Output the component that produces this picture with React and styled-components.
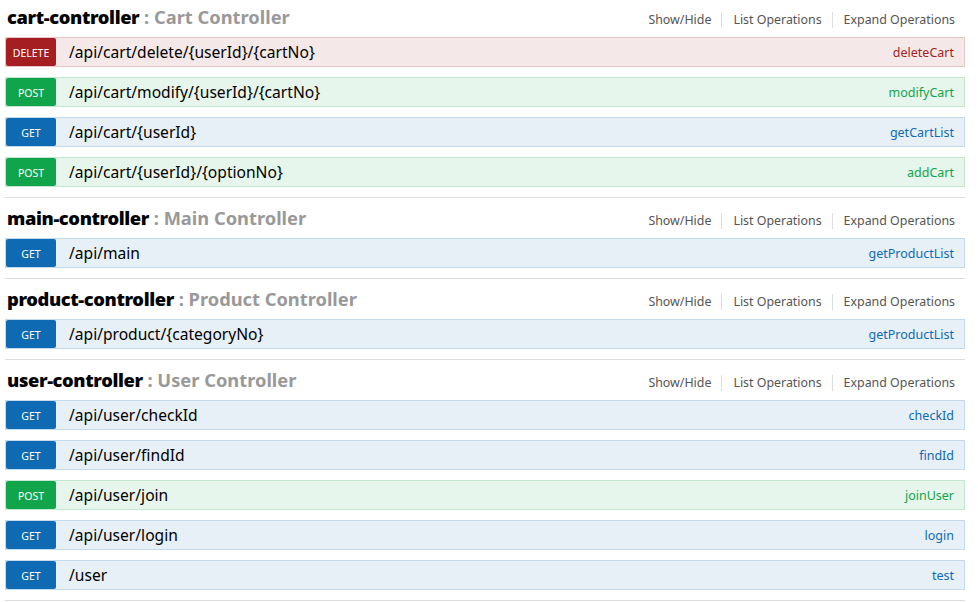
import React from "react";
import styled, { createGlobalStyle } from "styled-components";

const Global = createGlobalStyle`
  html, body { margin: 0; padding: 0; background: #fff; }
  body { font-family: "Noto Sans", "Open Sans", sans-serif; color: #000; }
`;

const METHOD = {
  get: { bg: "#e7f0f7", border: "#c3d9ec", badge: "#0f6ab4", text: "#0f6ab4" },
  post: { bg: "#e7f6ec", border: "#c3e8d1", badge: "#10a54a", text: "#10a54a" },
  delete: { bg: "#f5e8e8", border: "#e8c6c7", badge: "#a41e22", text: "#a41e22" },
};

const Wrap = styled.div`
  width: 960px;
  margin: -3px 0 0 5px;
`;

const Resource = styled.section`
  border-bottom: 1px solid #ddd;
`;

const Heading = styled.div`
  height: 40px;
  box-sizing: border-box;
  padding-top: 10px;
  display: flex;
  align-items: baseline;
  justify-content: space-between;
`;

const Title = styled.h2`
  margin: 0 0 0 2px;
  font-size: 18.3px;
  line-height: 20px;
  font-weight: bold;
  color: #999;
  white-space: nowrap;
  & b { color: #000; letter-spacing: -0.36px; }
`;

const Options = styled.ul`
  list-style: none;
  margin: 0;
  padding: 0;
  display: flex;
  align-items: baseline;
`;

const Option = styled.li`
  font-size: 12.4px;
  color: #555;
  padding: 0 10px 0 11px;
  line-height: 16px;
  border-right: 1px solid #ddd;
  &:last-child { border-right: none; padding-right: 10px; }
`;

const Operations = styled.ul`
  list-style: none;
  margin: 0;
  padding: 0;
`;

const Operation = styled.li`
  margin-bottom: 10px;
  height: 30px;
  box-sizing: border-box;
  border: 1px solid ${(p) => METHOD[p.$m].border};
  background: ${(p) => METHOD[p.$m].bg};
  display: flex;
  align-items: center;
  padding: 0 10px 0 0;
`;

const Badge = styled.span`
  width: 50px;
  height: 28px;
  border-radius: 2px;
  background: ${(p) => METHOD[p.$m].badge};
  color: #fff;
  font-size: 10.5px;
  text-transform: uppercase;
  display: flex;
  align-items: center;
  justify-content: center;
  padding-top: 2px;
  box-sizing: border-box;
  flex: none;
`;

const Path = styled.span`
  margin-left: 13px;
  font-size: 15.6px;
  color: #000;
  flex: 1;
  margin-top: -1px;
`;

const OpName = styled.span`
  font-size: 12.5px;
  color: ${(p) => METHOD[p.$m].text};
`;

const data = [
  {
    name: "cart-controller",
    desc: "Cart Controller",
    ops: [
      ["delete", "/api/cart/delete/{userId}/{cartNo}", "deleteCart"],
      ["post", "/api/cart/modify/{userId}/{cartNo}", "modifyCart"],
      ["get", "/api/cart/{userId}", "getCartList"],
      ["post", "/api/cart/{userId}/{optionNo}", "addCart"],
    ],
  },
  {
    name: "main-controller",
    desc: "Main Controller",
    ops: [["get", "/api/main", "getProductList"]],
  },
  {
    name: "product-controller",
    desc: "Product Controller",
    ops: [["get", "/api/product/{categoryNo}", "getProductList"]],
  },
  {
    name: "user-controller",
    desc: "User Controller",
    ops: [
      ["get", "/api/user/checkId", "checkId"],
      ["get", "/api/user/findId", "findId"],
      ["post", "/api/user/join", "joinUser"],
      ["get", "/api/user/login", "login"],
      ["get", "/user", "test"],
    ],
  },
];

export default function App() {
  return (
    <>
      <Global />
      <Wrap>
        {data.map((r) => (
          <Resource key={r.name}>
            <Heading>
              <Title>
                <b>{r.name}</b> : {r.desc}
              </Title>
              <Options>
                <Option>Show/Hide</Option>
                <Option>List Operations</Option>
                <Option>Expand Operations</Option>
              </Options>
            </Heading>
            <Operations>
              {r.ops.map(([m, path, op], i) => (
                <Operation key={i} $m={m}>
                  <Badge $m={m}>{m}</Badge>
                  <Path>{path}</Path>
                  <OpName $m={m}>{op}</OpName>
                </Operation>
              ))}
            </Operations>
          </Resource>
        ))}
      </Wrap>
    </>
  );
}
